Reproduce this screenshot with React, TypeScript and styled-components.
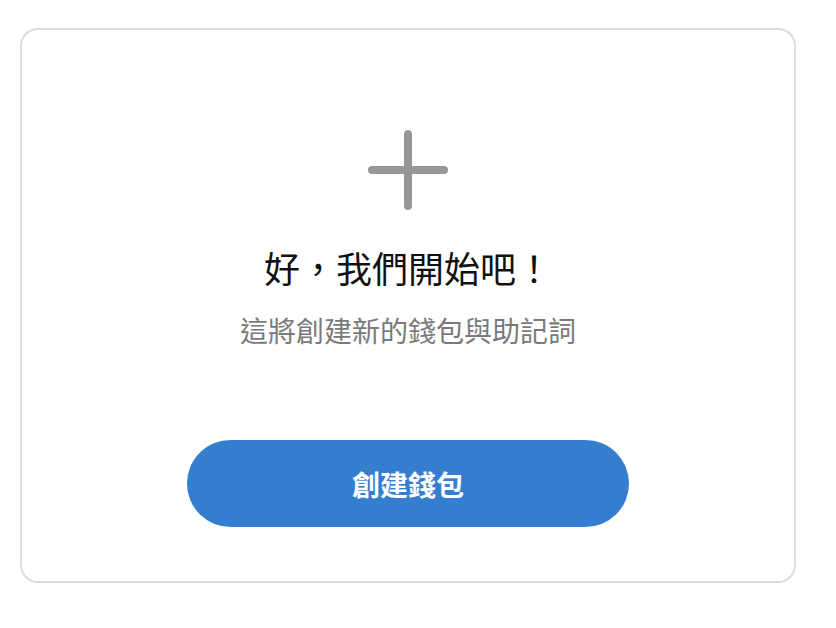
import styled, { createGlobalStyle } from 'styled-components';

const GlobalStyle = createGlobalStyle`
	html, body {
		margin: 0;
		padding: 0;
		background: #ffffff;
	}
	body {
		font-family: 'Noto Sans CJK TC', 'Noto Sans', sans-serif;
	}
`;

const Page = styled.div`
	padding: 28px 0 0 20px;
`;

const Card = styled.div`
	box-sizing: border-box;
	width: 776px;
	height: 555px;
	border: 2px solid #dcdcdc;
	border-radius: 18px;
	display: flex;
	flex-direction: column;
	align-items: center;
	padding-top: 100px;
`;

const PlusIcon = () => (
	<svg width="80" height="80" viewBox="0 0 80 80" fill="none">
		<path d="M40 4v72M4 40h72" stroke="#979797" strokeWidth="8" strokeLinecap="round" />
	</svg>
);

const Title = styled.h1`
	margin: 36px 0 0 0;
	font-size: 36px;
	line-height: 43px;
	font-weight: 400;
	color: #111111;
`;

const Subtitle = styled.p`
	margin: 24px 0 0 0;
	font-size: 28px;
	line-height: 34px;
	font-weight: 400;
	color: #7a7a7a;
`;

const CreateButton = styled.button`
	margin-top: 93px;
	width: 442px;
	height: 87px;
	border: none;
	border-radius: 44px;
	background: #357ecf;
	color: #ffffff;
	font-family: inherit;
	font-size: 28px;
	font-weight: 700;
	cursor: pointer;
`;

export const App = () => {
	return (
		<Page>
			<GlobalStyle />
			<Card>
				<PlusIcon />
				<Title>好，我們開始吧！</Title>
				<Subtitle>這將創建新的錢包與助記詞</Subtitle>
				<CreateButton>創建錢包</CreateButton>
			</Card>
		</Page>
	);
};
export default App;
